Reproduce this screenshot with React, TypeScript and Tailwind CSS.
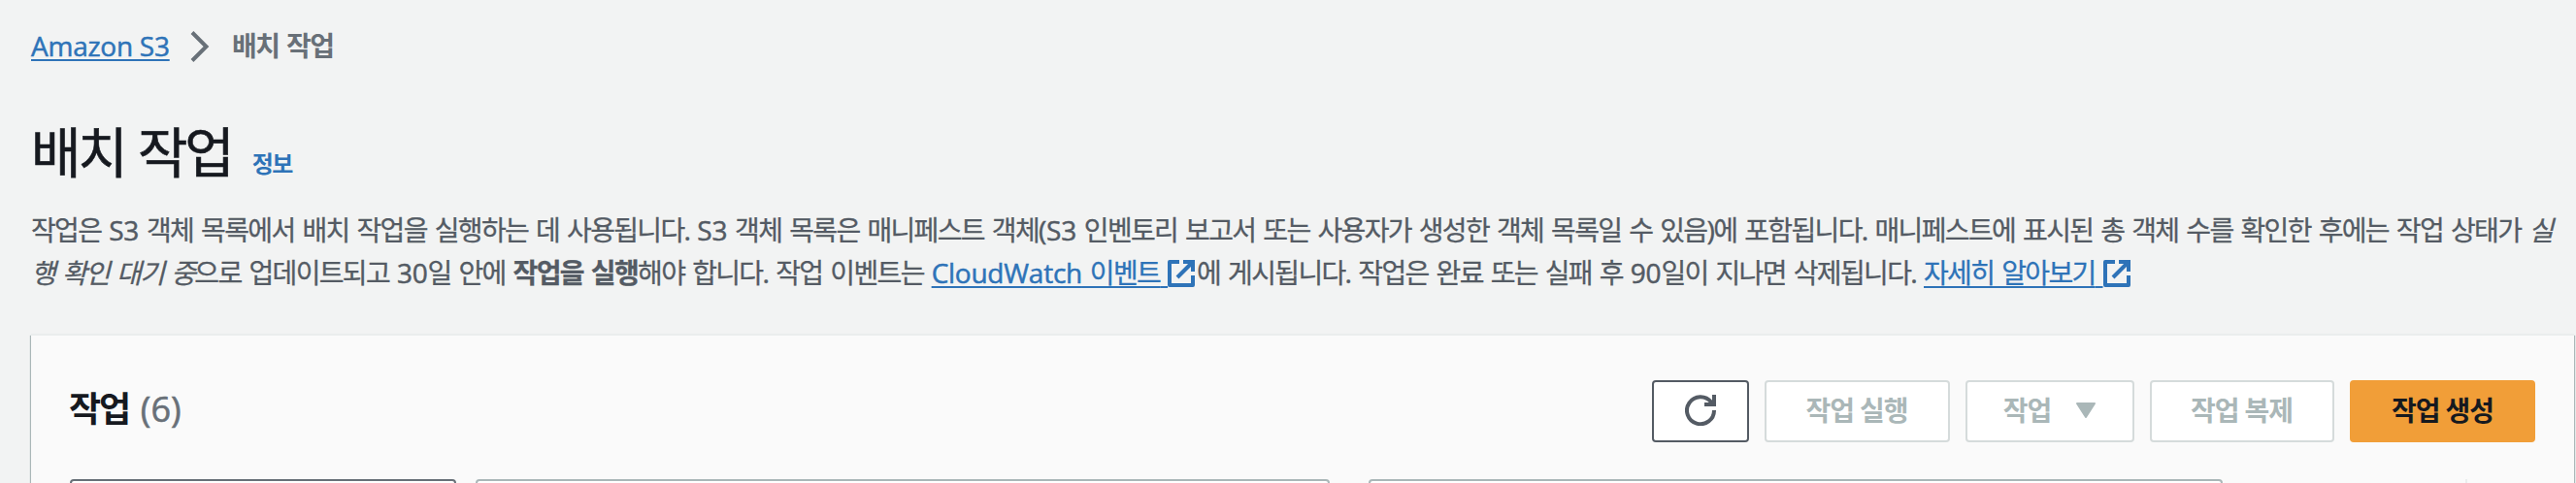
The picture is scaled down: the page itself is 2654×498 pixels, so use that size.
import type { ReactNode } from "react";

const Latin = ({ children }: { children: ReactNode }) => (
  <span className="font-['Open_Sans','Noto_Sans',sans-serif] font-medium tracking-[-0.25px] [-webkit-text-stroke:0.5px_currentColor]">{children}</span>
);

const ExternalIcon = () => (
  <svg viewBox="0 0 28 28" className="mr-[2px] mb-[3px] inline-block h-7 w-7 align-[-7px]" fill="none" stroke="currentColor" strokeWidth="4">
    <path d="M12 2H2V26H26V16" strokeLinejoin="round" />
    <path d="M16 2H26V12" />
    <path d="M25 3L10 18" />
  </svg>
);

const ExternalLink = ({ children }: { children: ReactNode }) => (
  <a className="text-[#2e73b8]">
    <span className="underline decoration-2 underline-offset-[3px] [text-decoration-skip-ink:none]">{children}&nbsp;</span>
    <ExternalIcon />
  </a>
);

const Button = ({ className, children }: { className: string; children: ReactNode }) => (
  <button className={`flex h-16 items-center justify-center rounded-[4px] border-2 pb-[2px] text-[28px] font-bold tracking-[-1.1px] ${className}`}>
    {children}
  </button>
);

const disabled = "border-[#d5dbdb] bg-white pr-[1px] text-[#aab7b8]";

export default function App() {
  return (
    <div className="flex h-[498px] w-[2654px] flex-col overflow-hidden bg-[#f2f3f3] font-['Noto_Sans','Noto_Sans_CJK_KR',sans-serif] whitespace-nowrap text-[#545b64]">
      <nav className="flex h-24 items-center pl-8 pb-[2px] text-[28px] leading-[40px]">
        <a className="w-[143px] text-[#2e73b8] underline decoration-2 underline-offset-[3px]">
          <Latin>Amazon S3</Latin>
        </a>
        <svg viewBox="0 0 20 32" className="mt-[2px] ml-[21px] h-8 w-5" fill="none" stroke="#687078" strokeWidth="4">
          <path d="M2 1.5L16.5 16L2 30.5" />
        </svg>
        <span className="ml-[23px] font-bold tracking-[-1.6px] text-[#687078] [word-spacing:2px]">배치 작업</span>
      </nav>

      <header className="flex h-[118px] items-baseline pl-8 pt-[20px]">
        <h1 className="text-[56px] leading-[80px] tracking-[-3.2px] text-[#16191f] [-webkit-text-stroke:0.6px_currentColor] [word-spacing:2px]">배치 작업</h1>
        <a className="ml-[21px] text-[24px] font-bold tracking-[-1.4px] text-[#2e73b8]">정보</a>
      </header>

      <div className="flex h-[132px] flex-col pl-8 pt-[1px] text-[28px] leading-[44px] tracking-[-1.65px] [-webkit-text-stroke:0.3px_currentColor] [word-spacing:2.25px]">
        <p>
          작업은 <Latin>S3</Latin> 객체 목록에서 배치 작업을 실행하는 데 사용됩니다. <Latin>S3</Latin> 객체 목록은 매니페스트 객체<Latin>(S3</Latin> 인벤토리 보고서 또는 사용자가 생성한 객체 목록일 수 있음)에 포함됩니다. 매니페스트에 표시된 총 객체 수를 확인한 후에는 작업 상태가 <em>실</em>
        </p>
        <p>
          <em>행 확인 대기 중</em>으로 업데이트되고 <Latin>30</Latin>일 안에 <b>작업을 실행</b>해야 합니다. 작업 이벤트는{" "}
          <ExternalLink><Latin>CloudWatch</Latin> 이벤트</ExternalLink>에 게시됩니다. 작업은 완료 또는 실패 후 <Latin>90</Latin>일이 지나면 삭제됩니다.{" "}
          <ExternalLink>자세히 알아보기</ExternalLink>
        </p>
      </div>

      <main className="ml-8 flex h-[152px] w-[2620px] shrink-0 flex-col bg-[#fafafa] shadow-[0_-2px_0_0_#eaeded,-1px_0_1px_0_#aab7b8,1px_0_1px_0_#aab7b8]">
        <div className="flex h-[148px] shrink-0 items-start justify-between pl-[39px] pr-10 pt-[46px]">
          <h2 className="flex items-center gap-[12px] text-[36px] leading-[60px]">
            <b className="tracking-[-2.2px] text-[#16191f]">작업</b>
            <span className="font-['Open_Sans','Noto_Sans',sans-serif] font-medium text-[#687078] [-webkit-text-stroke:0.6px_currentColor]">(6)</span>
          </h2>
          <div className="flex gap-4">
            <Button className="w-[100px] border-[#545b64] bg-white text-[#545b64]">
              <svg viewBox="0 0 32 32" className="h-8 w-8" fill="none" stroke="currentColor" strokeWidth="4">
                <path d="M30 16A14 14 0 1 1 27 7.5L30 10" />
                <path d="M30 0V10H20" />
              </svg>
            </Button>
            <Button className={`w-[191px] ${disabled}`}>작업 실행</Button>
            <Button className={`w-[174px] gap-[26px] ${disabled}`}>
              작업
              <svg viewBox="0 0 20 16" className="h-4 w-5" fill="currentColor" stroke="currentColor" strokeWidth="2" strokeLinejoin="round">
                <path d="M1 1H19L10 15Z" />
              </svg>
            </Button>
            <Button className={`w-[190px] ${disabled}`}>작업 복제</Button>
            <Button className="w-[191px] border-[#f19e38] bg-[#f19e38] text-[#16191f]">작업 생성</Button>
          </div>
        </div>
        <div className="flex h-16 shrink-0 pl-10">
          <div className="w-[398px] rounded-[4px] border-2 border-[#687078] bg-white" />
          <div className="ml-5 w-[880px] rounded-[4px] border-2 border-[#aab7b8] bg-white" />
          <div className="ml-10 w-[880px] rounded-[4px] border-2 border-[#aab7b8] bg-white" />
          <div className="ml-[250px] w-[2px] bg-[#eaeded]" />
        </div>
      </main>
    </div>
  );
}
